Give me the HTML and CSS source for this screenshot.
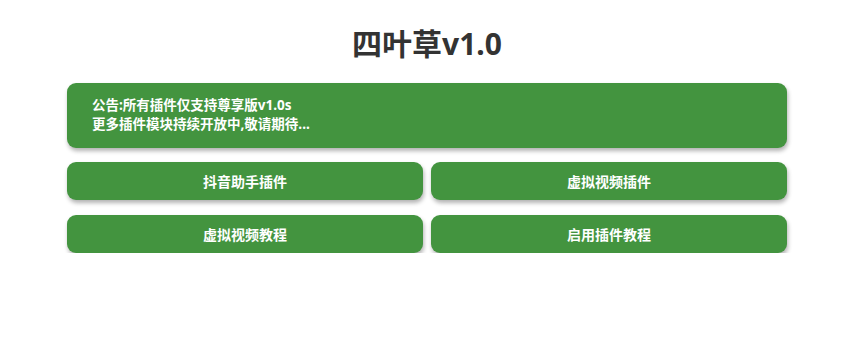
FILE: index.html
```html
<!DOCTYPE html>
<html lang="zh">
<head>
<meta charset="utf-8">
<title>四叶草v1.0</title>
<link rel="stylesheet" href="styles.css">
</head>
<body>
<div class="page">
  <h1 class="title">四叶草v1.0</h1>
  <div class="notice">
    <div>公告:所有插件仅支持尊享版v1.0s</div>
    <div>更多插件模块持续开放中,敬请期待...</div>
  </div>
  <div class="grid">
    <a class="btn">抖音助手插件</a>
    <a class="btn">虚拟视频插件</a>
    <a class="btn">虚拟视频教程</a>
    <a class="btn">启用插件教程</a>
  </div>
</div>
</body>
</html>
```
FILE: styles.css
```css
html, body {
  margin: 0;
  padding: 0;
  background: #ffffff;
}
body {
  font-family: "Noto Sans", "Noto Sans CJK SC", sans-serif;
  padding-left: 4px;
}
.page {
  width: 720px;
  margin: 0 auto;
  padding-top: 20px;
}
.title {
  margin: 0 0 15px;
  text-align: center;
  font-size: 30px;
  line-height: 48px;
  font-weight: 700;
  color: #333333;
}
.notice {
  background: #43943f;
  color: #ffffff;
  border-radius: 9px;
  box-shadow: 1px 3px 4px rgba(0, 0, 0, 0.3);
  padding: 13px 25px;
  height: 39px;
  font-size: 13.5px;
  line-height: 19px;
  font-weight: 700;
}
.grid {
  display: grid;
  grid-template-columns: 1fr 1fr;
  column-gap: 8px;
  row-gap: 15px;
  margin-top: 14px;
}
.btn {
  display: flex;
  align-items: center;
  justify-content: center;
  height: 38px;
  background: #43943f;
  color: #ffffff;
  border-radius: 9px;
  box-shadow: 1px 3px 4px rgba(0, 0, 0, 0.3);
  font-size: 14px;
  font-weight: 700;
}
```
